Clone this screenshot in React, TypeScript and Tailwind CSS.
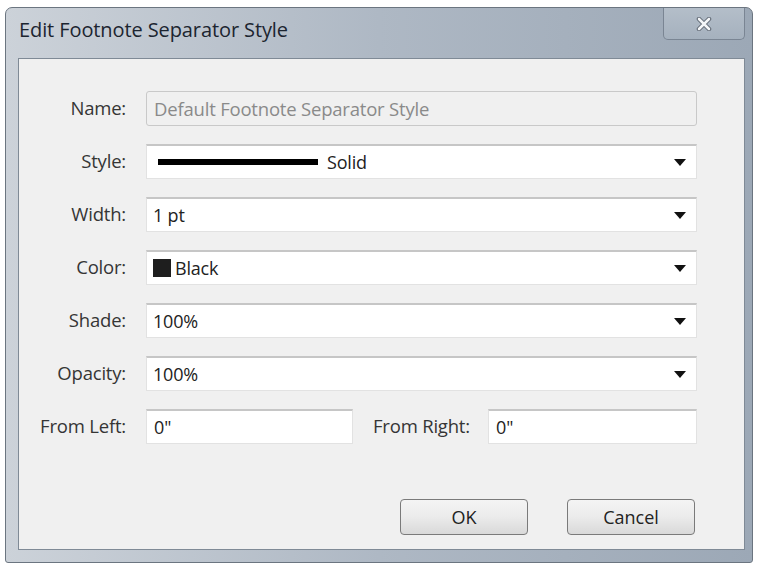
import React from 'react';

const font = { fontFamily: '"Open Sans", "Noto Sans", sans-serif' };

function Arrow() {
  return (
    <svg width="12" height="7" viewBox="0 0 12 7" className="shrink-0">
      <path d="M0 0 L12 0 L6 7 Z" fill="#111" />
    </svg>
  );
}

function Label({ children }: { children: React.ReactNode }) {
  return <div className="text-right text-[18.5px] tracking-[-0.2px] text-[#353535] leading-none whitespace-nowrap">{children}</div>;
}

function Select({ children }: { children: React.ReactNode }) {
  return (
    <div className="h-[35px] bg-white border border-[#e2e2e2] border-t-[#c6c6c6] border-t-2 flex items-center justify-between pl-[6px] pr-[10px] text-[18px] tracking-[-0.2px] text-[#222]">
      <div className="flex items-center">{children}</div>
      <Arrow />
    </div>
  );
}

function TextBox({ value }: { value: string }) {
  return (
    <div className="h-[35px] bg-white border border-[#e2e2e2] border-t-[#c6c6c6] border-t-2 flex items-center pl-[7px] text-[18px] text-[#222]">
      {value}
    </div>
  );
}

export default function App() {
  const rows = [
    { label: 'Style:', content: (
      <>
        <span className="inline-block w-[160px] h-[6px] bg-black ml-[5px] mr-[9px]" />
        <span>Solid</span>
      </>
    ) },
    { label: 'Width:', content: <span>1 pt</span> },
    { label: 'Color:', content: (
      <>
        <span className="inline-block w-[18px] h-[18px] bg-[#1e1e1e] mr-[4px]" />
        <span>Black</span>
      </>
    ) },
    { label: 'Shade:', content: <span>100%</span> },
    { label: 'Opacity:', content: <span>100%</span> },
  ];

  return (
    <div className="w-[760px] h-[567px] bg-white pt-[7px] pl-[5px] pr-[7px] pb-[4px]" style={font}>
      <div className="h-full flex flex-col rounded-t-[7px] rounded-b-[3px] border border-[#6b7580] bg-gradient-to-r from-[#ccd2d9] via-[#aeb8c4] to-[#9ca8b6] pl-[12px] pr-[7px] pb-[12px]">
        <div className="h-[50px] flex items-start justify-between shrink-0">
          <div className="mt-[12px] ml-[1px] text-[20px] tracking-[-0.1px] text-[#1c2530] leading-none">Edit Footnote Separator Style</div>
          <div className="w-[82px] h-[32px] rounded-b-[5px] border border-t-0 border-[#7a8593] bg-gradient-to-b from-[#b4bec9] to-[#a5b1be] flex items-center justify-center">
            <svg width="16" height="14" viewBox="0 0 16 14">
              <path d="M3 2 L13 12 M13 2 L3 12" stroke="#5b6470" strokeWidth="4.5" strokeLinecap="round" />
              <path d="M3 2 L13 12 M13 2 L3 12" stroke="#f4f6f8" strokeWidth="2.6" strokeLinecap="round" />
            </svg>
          </div>
        </div>
        <div className="flex-1 bg-[#f0f0f0] border border-[#7f8a96] flex flex-col pt-[32px] pr-[47px] pb-[14px]">
          <div className="grid grid-cols-[107px_1fr] gap-x-[20px] gap-y-[18px] items-center">
            <Label>Name:</Label>
            <div className="h-[35px] bg-[#f0f0f0] border border-[#c9c9c9] rounded-[3px] flex items-center pl-[7px] text-[18.5px] tracking-[-0.2px] text-[#8a8a8a]">
              Default Footnote Separator Style
            </div>
            {rows.map((r) => (
              <React.Fragment key={r.label}>
                <Label>{r.label}</Label>
                <Select>{r.content}</Select>
              </React.Fragment>
            ))}
            <Label>From Left:</Label>
            <div className="flex items-center">
              <div className="w-[207px]"><TextBox value={'0"'} /></div>
              <div className="ml-[20px] w-[98px] text-[18.5px] tracking-[-0.2px] text-[#353535] leading-none whitespace-nowrap">From Right:</div>
              <div className="ml-[17px] flex-1"><TextBox value={'0"'} /></div>
            </div>
          </div>
          <div className="mt-auto flex justify-end gap-[39px] pr-[2px]">
            <button className="w-[128px] h-[36px] rounded-[4px] border border-[#7a7a7a] bg-gradient-to-b from-[#f4f4f4] via-[#ebebeb] to-[#d9d9d9] text-[18px] text-[#222]">OK</button>
            <button className="w-[128px] h-[36px] rounded-[4px] border border-[#7a7a7a] bg-gradient-to-b from-[#f4f4f4] via-[#ebebeb] to-[#d9d9d9] text-[18px] text-[#222]">Cancel</button>
          </div>
        </div>
      </div>
    </div>
  );
}
